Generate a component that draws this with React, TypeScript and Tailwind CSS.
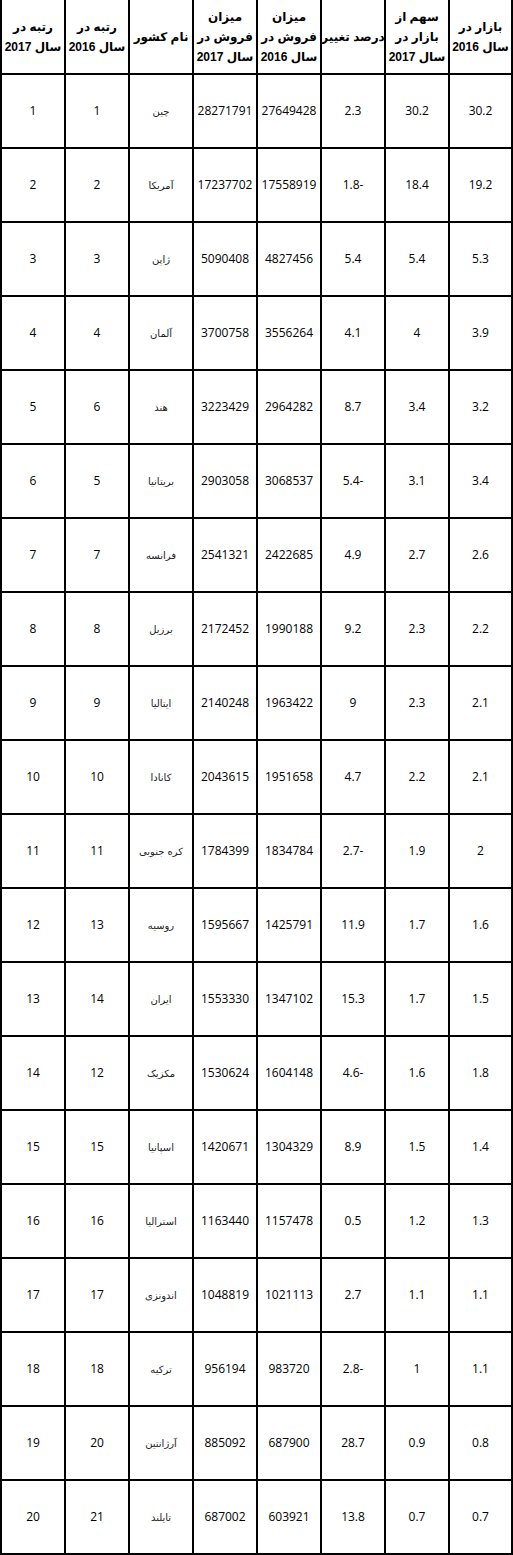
import React from "react";

type Row = [string, string, string, string, string, string, string, string];

const rows: Row[] = [
  ["1", "1", "چین", "28271791", "27649428", "2.3", "30.2", "30.2"],
  ["2", "2", "آمریکا", "17237702", "17558919", "1.8-", "18.4", "19.2"],
  ["3", "3", "ژاپن", "5090408", "4827456", "5.4", "5.4", "5.3"],
  ["4", "4", "آلمان", "3700758", "3556264", "4.1", "4", "3.9"],
  ["5", "6", "هند", "3223429", "2964282", "8.7", "3.4", "3.2"],
  ["6", "5", "بریتانیا", "2903058", "3068537", "5.4-", "3.1", "3.4"],
  ["7", "7", "فرانسه", "2541321", "2422685", "4.9", "2.7", "2.6"],
  ["8", "8", "برزیل", "2172452", "1990188", "9.2", "2.3", "2.2"],
  ["9", "9", "ایتالیا", "2140248", "1963422", "9", "2.3", "2.1"],
  ["10", "10", "کانادا", "2043615", "1951658", "4.7", "2.2", "2.1"],
  ["11", "11", "کره جنوبی", "1784399", "1834784", "2.7-", "1.9", "2"],
  ["12", "13", "روسیه", "1595667", "1425791", "11.9", "1.7", "1.6"],
  ["13", "14", "ایران", "1553330", "1347102", "15.3", "1.7", "1.5"],
  ["14", "12", "مکزیک", "1530624", "1604148", "4.6-", "1.6", "1.8"],
  ["15", "15", "اسپانیا", "1420671", "1304329", "8.9", "1.5", "1.4"],
  ["16", "16", "استرالیا", "1163440", "1157478", "0.5", "1.2", "1.3"],
  ["17", "17", "اندونزی", "1048819", "1021113", "2.7", "1.1", "1.1"],
  ["18", "18", "ترکیه", "956194", "983720", "2.8-", "1", "1.1"],
  ["19", "20", "آرژانتین", "885092", "687900", "28.7", "0.9", "0.8"],
  ["20", "21", "تایلند", "687002", "603921", "13.8", "0.7", "0.7"],
];

const headers: string[][] = [
  ["رتبه در", "سال 2017"],
  ["رتبه در", "سال 2016"],
  ["نام کشور"],
  ["میزان", "فروش در", "سال 2017"],
  ["میزان", "فروش در", "سال 2016"],
  ["درصد تغییر"],
  ["سهم از", "بازار در", "سال 2017"],
  ["بازار در", "سال 2016"],
];

export default function App() {
  return (
    <div className="w-[513px] bg-white">
      <div className="grid grid-cols-[64px_64px_64px_64px_64px_64px_64px_63px] border-l-2 border-black">
        {headers.map((h, i) => (
          <div
            key={"h" + i}
            dir="rtl"
            className="h-[75px] border-r-2 border-b-2 border-black flex flex-col items-center justify-center text-center text-[12px] leading-[20px] font-bold text-black font-['Liberation_Sans','DejaVu_Sans',sans-serif]"
          >
            {h.map((line, j) => (
              <span key={j} className="whitespace-nowrap">
                {line}
              </span>
            ))}
          </div>
        ))}
        {rows.map((r, ri) =>
          r.map((c, ci) => (
            <div
              key={ri + "-" + ci}
              className="h-[74px] border-r-2 border-b-2 border-black flex items-center justify-center text-center text-black"
            >
              {ci === 2 ? (
                <span
                  dir="rtl"
                  className="whitespace-nowrap text-[10px] text-[#222] font-['DejaVu_Sans',sans-serif]"
                >
                  {c}
                </span>
              ) : (
                <span className="whitespace-nowrap text-[12px] font-['Open_Sans',sans-serif]">
                  {c}
                </span>
              )}
            </div>
          ))
        )}
      </div>
    </div>
  );
}
